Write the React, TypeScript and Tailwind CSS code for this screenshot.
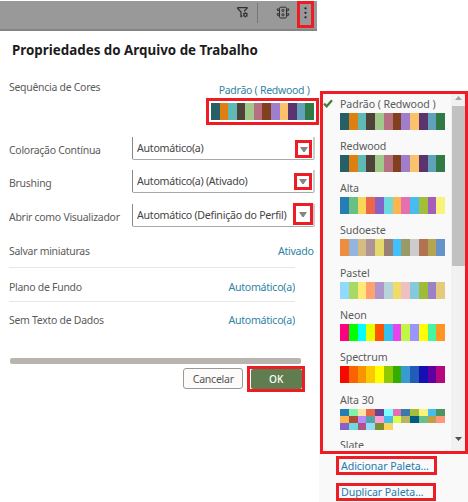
import React from "react";

const REDWOOD = ["#265f66", "#de7f11", "#5fb9b5", "#4f4238", "#a1ca8a", "#b67082", "#83401e", "#9f7fcc", "#fcc26b", "#5a336f", "#5fa2ba", "#2f7a45"];

const PALETTES: { name: string; gap: string; colors: string[] }[] = [
  { name: "Padrão ( Redwood )", gap: "h-[42px]", colors: REDWOOD },
  { name: "Redwood", gap: "h-[42px]", colors: REDWOOD },
  { name: "Alta", gap: "h-[42px]", colors: ["#267db3", "#68c182", "#fad55c", "#ed6647", "#8561c8", "#6ddbdb", "#ffb54d", "#e371b2", "#47bdef", "#a2bf39", "#a75dba", "#f7f37b"] },
  { name: "Sudoeste", gap: "h-[43px]", colors: ["#f08c3e", "#91b5df", "#d6bb83", "#ae9497", "#e5d96b", "#998074", "#40c0ff", "#999a67", "#cccccc", "#b27254", "#b5a450", "#6592c9"] },
  { name: "Pastel", gap: "h-[42px]", colors: ["#92d9ff", "#a8d965", "#ffe974", "#ffa270", "#ae96cd", "#b9d3db", "#efdb65", "#eec1c0", "#84c9dc", "#9dbd38", "#9d81c7", "#e3ca7c"] },
  { name: "Neon", gap: "h-[42px]", colors: ["#ff007f", "#00ff00", "#00ffff", "#e5ff00", "#ff5500", "#35c0f0", "#e743ef", "#c0f746", "#9b94fc", "#ffff00", "#46f5a0", "#ff9621"] },
  { name: "Spectrum", gap: "h-[43px]", colors: ["#f50a00", "#fa6400", "#f79400", "#fbc900", "#ffff00", "#8fca00", "#33ae00", "#399bd0", "#235bb8", "#1510b2", "#6000a1", "#b6077d"] },
];

const ALTA30 = [
  "#267db3", "#81f3a4", "#fce5a4", "#ed6647", "#634694", "#80ffff", "#e371b2", "#397aa9", "#a2bf39", "#f7f37b", "#47bdef", "#4d9560",
  "#ffb54d", "#ae4a35", "#b78aff", "#54a3a5", "#ff9fd4", "#47bdef", "#d9ff4d", "#b9b55c", "#005c85", "#6cbf88", "#bfa047", "#ff977b",
  "#8561c8", "#6ddbdb", "#aa5586", "#92dbff", "#7b902b", "#fad55c",
];

const LABEL = "origin-left scale-x-[0.91] tracking-[-0.3px]";
const VALUE = "origin-left scale-x-[0.925] tracking-[-0.3px]";
const LINK = "origin-right scale-x-[0.925] tracking-[-0.3px] text-[#2f83a4]";
const ITEM = "origin-left scale-x-[0.925] tracking-[-0.1px]";

function Swatches({ colors }: { colors: string[] }) {
  return (
    <div className="flex h-full w-full">
      {colors.map((c, i) => (
        <span key={i} className="h-full flex-1" style={{ backgroundColor: c }} />
      ))}
    </div>
  );
}

function Header() {
  return (
    <header className="mt-px flex h-[30px] w-[317px] border-b-2 border-[#858585] bg-[#999999]">
      <svg className="mt-[5px] ml-[236px] h-[13px] w-[13px]" viewBox="0 0 13 13" fill="none" stroke="#303030" strokeWidth="1.2">
        <path d="M1.5 1.6h9.6v.6L8 5.4M1.500 1.600v.6L5 6v4.600l1.300-.8" />
        <circle cx="9.4" cy="8.8" r="1.6" />
        <path d="M9.400 6.300v1M9.400 10.400v1M7.200 7.500l.9.5M10.700 9.600l.9.500M11.600 7.500l-.9.500M8.100 9.600l-.9.500" strokeWidth=".9" />
      </svg>
      <span className="mt-[2px] ml-[8px] h-[20px] w-px bg-[#777]" />
      <svg className="mt-[5px] ml-[18px] h-[14px] w-[14px]" viewBox="0 0 14 14" fill="none" stroke="#303030" strokeWidth="1">
        <rect x="3.5" y="1.200" width="7" height="10.800" rx="1.300" />
        <path d="M3.500 3H1l.8 1.800h1.700M3.500 7.800H1l.8 1.900h1.700M10.500 3H13l-.8 1.800h-1.700M10.500 7.800H13l-.8 1.900h-1.700" />
        <circle cx="7" cy="4.400" r="1.100" />
        <circle cx="7" cy="8.800" r="1.100" />
      </svg>
      <div className="ml-[7px] flex h-[27px] w-[17px] items-start justify-center border-[3px] border-[#ee1c25] pt-[3px]">
        <svg className="h-[12px] w-[3px]" viewBox="0 0 3 12" fill="#222">
          <circle cx="1.5" cy="1.3" r="1.15" />
          <circle cx="1.5" cy="5.8" r="1.15" />
          <circle cx="1.5" cy="10.3" r="1.15" />
        </svg>
      </div>
    </header>
  );
}

function SelectRow({ label, value, row, mark }: { label: string; value: string; row: string; mark: string }) {
  return (
    <div className={`flex ${row}`}>
      <span className={`w-[123px] shrink-0 pt-[5px] ${LABEL}`}>{label}</span>
      <div className="flex h-[23px] w-[183px] shrink-0 justify-between rounded-b-[2px] border-r-2 border-b border-l border-r-[#cccccc] border-b-[#aaa] border-l-[#888] pl-[4px]">
        <span className={`w-[150px] pt-[3px] text-[#454545] ${VALUE}`}>{value}</span>
        <span className={`flex shrink-0 items-center justify-center border-[3px] border-[#ee1c25] ${mark}`}>
          <svg className="h-[5px] w-[8px]" viewBox="0 0 8 5"><path d="M0 0h8L4.7 5H3.3z" fill="#858585" /></svg>
        </span>
      </div>
    </div>
  );
}

export default function App() {
  return (
    <div className="flex h-[502px] w-[468px] overflow-hidden bg-white font-['Noto_Sans','Open_Sans',sans-serif] text-[11.5px] leading-[16px] whitespace-nowrap text-[#5b5b5b]">
      <section className="flex w-[319px] shrink-0 flex-col">
        <Header />
        <h1 className="ml-[11.5px] h-[37px] origin-left scale-x-[0.891] pt-[8px] text-[15px] leading-[20px] font-bold text-[#1c1c1c]">Propriedades do Arquivo de Trabalho</h1>
        <div className="flex h-[69px] justify-between pl-[9px]">
          <span className={`pt-[11px] ${LABEL}`}>Sequência de Cores</span>
          <div className="flex flex-col items-end pt-[14px]">
            <span className="mr-[9px] origin-right scale-x-[0.913] tracking-[-0.3px] text-[#2f83a4]">Padrão ( Redwood )</span>
            <div className="h-[27px] w-[113px] border-[3px] border-[#ee1c25] px-[2px] py-[2px]">
              <Swatches colors={REDWOOD} />
            </div>
          </div>
        </div>
        <div className="flex flex-col pl-[9px]">
          <SelectRow label="Coloração Contínua" value="Automático(a)" row="h-[33px]" mark="mt-[3px] mr-px h-[18px] w-[17px]" />
          <SelectRow label="Brushing" value="Automático(a) (Ativado)" row="h-[34px]" mark="mt-[3px] mr-px h-[17px] w-[18px]" />
          <SelectRow label="Abrir como Visualizador" value="Automático (Definição do Perfil)" row="h-[33px]" mark="-mt-px h-[22px] w-[20px]" />
        </div>
        <div className="flex h-[30px] justify-between pt-[6px] pr-[5px] pl-[9px]">
          <span className={LABEL}>Salvar miniaturas</span>
          <span className={LINK}>Ativado</span>
        </div>
        <div className="ml-[9px] flex h-[34px] w-[286px] justify-between border-t border-[#e6e6e6] pt-[11px]">
          <span className={LABEL}>Plano de Fundo</span>
          <span className={LINK}>Automático(a)</span>
        </div>
        <div className="ml-[9px] flex h-[57px] w-[286px] items-start justify-between border-t border-[#e6e6e6] pt-[10px]">
          <span className={LABEL}>Sem Texto de Dados</span>
          <span className={LINK}>Automático(a)</span>
        </div>
        <div className="ml-[10px] h-[6px] w-[291px] rounded-[2px] bg-[#bab4af]" />
        <div className="flex justify-end pt-[2px] pr-[14px]">
          <button className="mt-[2px] mr-[4px] flex h-[21px] w-[60px] items-center justify-center rounded-[3px] border border-[#999] bg-[#fcfbfa] text-[#555]">
            <span className="scale-x-[0.92] tracking-[-0.3px]">Cancelar</span>
          </button>
          <div className="h-[26px] w-[58px] border-[3px] border-[#ee1c25] bg-white pl-px">
            <button className="flex h-full w-full items-center justify-center rounded-[2px] bg-[#5f7d4f] font-medium text-white">
              <span className="scale-x-[0.88]">OK</span>
            </button>
          </div>
        </div>
      </section>

      <aside className="mt-[91px] flex h-[411px] w-[149px] shrink-0 flex-col bg-[#f9f9f9] pl-px">
        <div className="flex h-[363px] w-[148px] border-[3px] border-[#ee1c25]">
          <div className="h-[354px] w-[128px] overflow-hidden">
            {PALETTES.map((p, i) => (
              <div key={p.name} className={`flex pt-[2px] ${p.gap}`}>
                <div className="w-[17px] pt-[3px]">
                  {i === 0 && (
                    <svg className="h-[9px] w-[10px]" viewBox="0 0 10 9"><path d="M1 4.6l2.7 2.7L9 1.2" fill="none" stroke="#4c7d39" strokeWidth="2.3" /></svg>
                  )}
                </div>
                <div className="w-[105px]">
                  <div className={`h-[17px] ${ITEM}`}>{p.name}</div>
                  <div className="h-[17px] w-[105px]"><Swatches colors={p.colors} /></div>
                </div>
              </div>
            ))}
            <div className="pt-[2px] pl-[17px]">
              <div className={`h-[17px] ${ITEM}`}>Alta 30</div>
              <div className="grid h-[21px] w-[105px] grid-cols-12 grid-rows-3">
                {ALTA30.map((c, i) => <span key={i} style={{ backgroundColor: c }} />)}
              </div>
              <div className={`pt-[7px] ${ITEM}`}>Slate</div>
            </div>
          </div>
          <div className="flex w-[14px] flex-col items-center bg-[#f1f1f1]">
            <svg className="mt-[2px] h-[4px] w-[7px]" viewBox="0 0 7 4"><path d="M3.5 0L7 4H0z" fill="#a3a3a3" /></svg>
            <span className="mt-[6px] ml-px h-[160px] w-[13px] bg-[#c1c1c1]" />
            <svg className="mt-[171px] h-[4px] w-[7px]" viewBox="0 0 7 4"><path d="M0 0h7L3.5 4z" fill="#505050" /></svg>
          </div>
        </div>
        <div className="mt-[2px] ml-[16px] h-[19px] w-[101px] border-[3px] border-[#ee1c25] pl-[2px] leading-[13px] text-[#2779ad]">
          <div className={ITEM}>Adicionar Paleta...</div>
        </div>
        <div className="mt-[8px] ml-[16px] h-[18px] w-[100px] border-[3px] border-[#ee1c25] pl-[2px] leading-[12px] text-[#2779ad]">
          <div className={ITEM}>Duplicar Paleta...</div>
        </div>
      </aside>
    </div>
  );
}
